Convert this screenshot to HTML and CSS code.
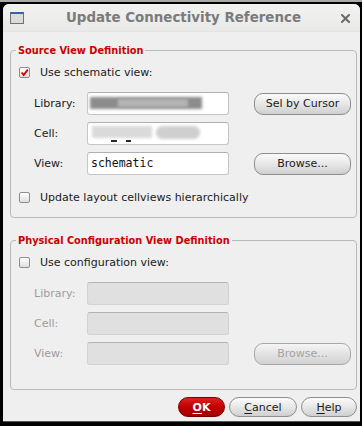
FILE: index.html
```html
<!DOCTYPE html>
<html>
<head>
<meta charset="utf-8">
<link rel="stylesheet" href="styles.css">
</head>
<body>
<div class="screen">
  <div class="topstrip"></div>
  <div class="window">
    <div class="titlebar">
      <span class="wicon"></span>
      <span class="title">Update Connectivity Reference</span>
      <svg class="close" width="9" height="9" viewBox="0 0 9 9"><path d="M1 1L8 8M8 1L1 8" stroke="#6b6b6b" stroke-width="2" stroke-linecap="square"/></svg>
    </div>
    <div class="content">
      <fieldset class="group g1">
        <legend>Source View Definition</legend>
        <label class="cbrow first">
          <span class="cb checked"><svg width="11" height="11" viewBox="0 0 11 11"><path d="M2 5.5L4.5 8.5L9.5 2" fill="none" stroke="#d00000" stroke-width="2.2"/></svg></span>
          <span>Use schematic view:</span>
        </label>
        <div class="form">
          <span class="lbl">Library:</span>
          <div class="inp"><span class="blur b1"></span><span class="blur b2"></span></div>
          <button class="btn">Sel by Cursor</button>
          <span class="lbl">Cell:</span>
          <div class="inp"><span class="blur c1"></span><span class="blur c2"></span><span class="dash d1"></span><span class="dash d2"></span></div>
          <span></span>
          <span class="lbl">View:</span>
          <div class="inp mono">schematic</div>
          <button class="btn">Browse...</button>
        </div>
        <label class="cbrow second">
          <span class="cb"></span>
          <span>Update layout cellviews hierarchically</span>
        </label>
      </fieldset>
      <fieldset class="group g2">
        <legend>Physical Configuration View Definition</legend>
        <label class="cbrow first">
          <span class="cb"></span>
          <span>Use configuration view:</span>
        </label>
        <div class="form disabled">
          <span class="lbl">Library:</span>
          <div class="inp"></div>
          <span></span>
          <span class="lbl">Cell:</span>
          <div class="inp"></div>
          <span></span>
          <span class="lbl">View:</span>
          <div class="inp"></div>
          <button class="btn dis">Browse...</button>
        </div>
      </fieldset>
      <div class="actions">
        <button class="btn ok"><u>O</u>K</button>
        <button class="btn cancel"><u>C</u>ancel</button>
        <button class="btn help"><u>H</u>elp</button>
      </div>
    </div>
  </div>
</div>
</body>
</html>
```
FILE: styles.css
```css
html, body {
  margin: 0;
  padding: 0;
  background: #000;
}
.screen {
  width: 362px;
  height: 426px;
  overflow: hidden;
  background: #000;
  font-family: "DejaVu Sans", sans-serif;
  font-size: 11px;
  color: #1a1a1a;
}
.topstrip {
  height: 2px;
  background: #a9a9a9;
  margin-bottom: 2px;
}
.window {
  margin: 0 2px 0 3px;
  height: 417px;
  background: #efefef;
  border-radius: 6px 6px 0 0;
  display: flex;
  flex-direction: column;
  box-shadow: 0 1px 0 #555;
}
.titlebar {
  height: 27px;
  display: flex;
  align-items: center;
  padding: 0 10px 0 7px;
  background: linear-gradient(#f2f2f1, #e9e9e7);
  border-radius: 6px 6px 0 0;
  border-bottom: 1px solid #e4e4e2;
}
.wicon {
  width: 12px;
  height: 9px;
  border: 1px solid #727272;
  border-top: 2px solid #3d5fa7;
  background: #dcdcda;
  flex: none;
  margin-top: 1px;
}
.title {
  flex: 1;
  text-align: center;
  font-weight: bold;
  font-size: 13.4px;
  color: #7b7b7b;
  padding-left: 2px;
}
.close {
  flex: none;
  margin-top: 1px;
}
.content {
  flex: 1;
  padding: 12px 3px 0 7px;
  display: flex;
  flex-direction: column;
}
.group {
  margin: 0;
  padding: 0 5px 0 8px;
  border: 1px solid #b9b9b9;
  border-radius: 4px;
  min-width: 0;
}
.group legend {
  color: #cc0000;
  font-weight: bold;
  font-size: 9.8px;
  line-height: 13px;
  padding: 0 2px;
  margin-left: -3px;
}
.g2 {
  margin-top: 16px;
  padding-bottom: 24px;
}
.g1 {
  padding-bottom: 12px;
}
.cbrow {
  display: flex;
  align-items: center;
  height: 16px;
  gap: 10px;
}
.cbrow.first { margin-top: 7px; }
.cbrow.second { margin-top: 14px; }
.cb {
  width: 11px;
  height: 11px;
  box-sizing: border-box;
  border: 1px solid #8d8d8d;
  border-radius: 2px;
  background: linear-gradient(#ffffff, #dedede);
  display: flex;
  align-items: center;
  justify-content: center;
  flex: none;
}
.cb svg { display: block; }
.form {
  margin-top: 12px;
  display: grid;
  grid-template-columns: 53px 142px 1fr;
  grid-auto-rows: 23px;
  row-gap: 7px;
  align-items: center;
  padding-left: 15px;
}
.lbl {
  color: #1a1a1a;
}
.inp {
  height: 23px;
  box-sizing: border-box;
  border: 1px solid #c6c6c6;
  border-top-color: #b0b0b0;
  border-radius: 3px;
  background: #fff;
  position: relative;
  overflow: hidden;
}
.mono {
  font-family: "DejaVu Sans Mono", monospace;
  font-size: 11.5px;
  line-height: 21px;
  padding-left: 3px;
  color: #111;
}
.blur {
  position: absolute;
  filter: blur(1.5px);
}
.b1 { left: 2px; top: 4px; width: 112px; height: 12px; background: #8c8c8c; }
.b2 { left: 30px; top: 6px; width: 70px; height: 8px; background: #b5b5b5; }
.c1 { left: 4px; top: 3px; width: 60px; height: 12px; background: #dadada; }
.c2 { left: 68px; top: 3px; width: 44px; height: 13px; background: #cfcfcf; border-radius: 6px; }
.dash { position: absolute; height: 2px; background: #2a2a2a; top: 17px; }
.d1 { left: 23px; width: 6px; }
.d2 { left: 38px; width: 5px; }
.btn {
  font-family: "DejaVu Sans", sans-serif;
  font-size: 11px;
  color: #1a1a1a;
  height: 22px;
  border: 1px solid #8e8e8e;
  border-radius: 9px;
  background: linear-gradient(#fbfbfb, #e7e7e7 50%, #cfcfcf);
  padding: 0;
  margin-left: 25px;
  width: 97px;
}
.form .btn { justify-self: start; }
.disabled .lbl { color: #9d9d9d; }
.disabled .inp {
  background: #e0e0e0;
  border-color: #d2d2d2;
  border-top-color: #b3b3b3;
}
.btn.dis {
  color: #a3a3a3;
  border-color: #a8a8a8;
  background: linear-gradient(#f5f5f5, #e3e3e3 50%, #d2d2d2);
}
.actions {
  display: flex;
  justify-content: flex-end;
  margin-top: 7px;
  gap: 4px;
  padding-right: 0;
}
.actions .btn {
  height: 20px;
  margin-left: 0;
  border-radius: 10px;
}
.btn u { text-underline-offset: 2px; }
.ok {
  width: 47px;
  color: #fff;
  font-weight: bold;
  background: linear-gradient(#e02020, #c00000 50%, #a30000);
  border-color: #7a0000;
}
.cancel { width: 68px; }
.help { width: 56px; }
```
